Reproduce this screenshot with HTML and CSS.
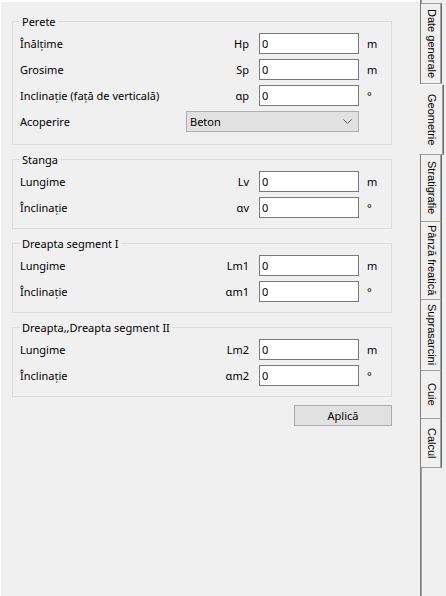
FILE: index.html
```html
<!DOCTYPE html>
<html lang="ro">
<head>
<meta charset="utf-8">
<title>Geometrie</title>
<link rel="stylesheet" href="styles.css">
</head>
<body>
<div class="window">
  <main class="page">
    <fieldset class="group group-wall">
      <legend>Perete</legend>
      <div class="row">
        <span class="label">Înălțime</span>
        <span class="sym">Hp</span>
        <input class="field" type="text" value="0">
        <span class="unit">m</span>
      </div>
      <div class="row">
        <span class="label">Grosime</span>
        <span class="sym">Sp</span>
        <input class="field" type="text" value="0">
        <span class="unit">m</span>
      </div>
      <div class="row">
        <span class="label">Inclinație (față de verticală)</span>
        <span class="sym">αp</span>
        <input class="field" type="text" value="0">
        <span class="unit">°</span>
      </div>
      <div class="row row-combo">
        <span class="label">Acoperire</span>
        <div class="combo">
          <span>Beton</span>
          <svg class="chev" width="9" height="5" viewBox="0 0 9 5"><path d="M0.5 0.5 L4.5 4.5 L8.5 0.5" fill="none" stroke="#5a5a5a" stroke-width="1"/></svg>
        </div>
      </div>
    </fieldset>

    <fieldset class="group">
      <legend>Stanga</legend>
      <div class="row">
        <span class="label">Lungime</span>
        <span class="sym">Lv</span>
        <input class="field" type="text" value="0">
        <span class="unit">m</span>
      </div>
      <div class="row">
        <span class="label">Înclinație</span>
        <span class="sym">αv</span>
        <input class="field" type="text" value="0">
        <span class="unit">°</span>
      </div>
    </fieldset>

    <fieldset class="group">
      <legend>Dreapta segment I</legend>
      <div class="row">
        <span class="label">Lungime</span>
        <span class="sym">Lm1</span>
        <input class="field" type="text" value="0">
        <span class="unit">m</span>
      </div>
      <div class="row">
        <span class="label">Înclinație</span>
        <span class="sym">αm1</span>
        <input class="field" type="text" value="0">
        <span class="unit">°</span>
      </div>
    </fieldset>

    <fieldset class="group">
      <legend>Dreapta,,Dreapta segment II</legend>
      <div class="row">
        <span class="label">Lungime</span>
        <span class="sym">Lm2</span>
        <input class="field" type="text" value="0">
        <span class="unit">m</span>
      </div>
      <div class="row">
        <span class="label">Înclinație</span>
        <span class="sym">αm2</span>
        <input class="field" type="text" value="0">
        <span class="unit">°</span>
      </div>
    </fieldset>

    <div class="actions">
      <button class="btn" type="button">Aplică</button>
    </div>
  </main>

  <nav class="tabs">
    <div class="tab t-general">Date generale</div>
    <div class="tab t-geom active">Geometrie</div>
    <div class="tab t-strat">Stratigrafie</div>
    <div class="tab t-water">Pânză freatică</div>
    <div class="tab t-load">Suprasarcini</div>
    <div class="tab t-nails">Cuie</div>
    <div class="tab t-calc">Calcul</div>
  </nav>
</div>
</body>
</html>
```

FILE: styles.css
```css
html, body {
  margin: 0;
  padding: 0;
  background: #f0f0f0;
}

body {
  font-family: "Noto Sans", "Open Sans", sans-serif;
  font-size: 11px;
  color: #000;
}

.window {
  display: flex;
  width: 446px;
  height: 596px;
  overflow: hidden;
}

/* tab page */
.page {
  width: 408px;
  border-top: 2px solid #fff;
  border-left: 1px solid #fff;
  padding: 12px 0 0 11px;
  box-sizing: content-box;
}

.group {
  width: 380px;
  box-sizing: border-box;
  margin: 0 0 7px 0;
  padding: 4px 0 10px 7px;
  border: 1px solid #dcdcdc;
  min-inline-size: 0;
}

.group-wall {
  padding-bottom: 12px;
}

.group legend {
  padding: 0 2px;
  margin: 0;
  line-height: 15px;
  height: 15px;
}

.row {
  display: grid;
  grid-template-columns: 1fr auto 100px 32px;
  align-items: center;
  height: 21px;
  margin-bottom: 5px;
}

.row:last-child {
  margin-bottom: 0;
}

.row-combo {
  grid-template-columns: 1fr 173px 32px;
}

.sym {
  text-align: right;
  margin-right: 10px;
}

.unit {
  padding-left: 8px;
}

.field {
  box-sizing: border-box;
  width: 100px;
  height: 21px;
  margin: 0;
  padding: 0 0 0 2px;
  border: 1px solid #7a7a7a;
  background: #fff;
  font: inherit;
  color: #000;
  outline: none;
}

.combo {
  box-sizing: border-box;
  height: 21px;
  display: flex;
  align-items: center;
  justify-content: space-between;
  padding: 0 6px 0 3px;
  background: #e1e1e1;
  border: 1px solid #adadad;
}

.chev {
  display: block;
}

.actions {
  width: 380px;
  display: flex;
  justify-content: flex-end;
  padding-top: 1px;
}

.btn {
  box-sizing: border-box;
  width: 98px;
  height: 21px;
  margin: 0;
  padding: 0;
  background: #e1e1e1;
  border: 1px solid #adadad;
  font: inherit;
  color: #000;
}

/* vertical tab strip */
.tabs {
  width: 25px;
  border-left: 1px solid #7f7f7f;
  box-shadow: inset 1px 0 0 #a0a0a0;
  display: flex;
  flex-direction: column;
  padding-top: 3px;
  font-family: "Liberation Sans", Arial, sans-serif;
  font-size: 11px;
}

.tab {
  box-sizing: border-box;
  width: 21px;
  writing-mode: vertical-rl;
  display: flex;
  align-items: center;
  justify-content: center;
  border-top: 1px solid #a0a0a0;
  border-bottom: 1px solid #a0a0a0;
  border-right: 1px solid #696969;
  box-shadow: inset -1px 0 0 #a0a0a0;
  background: #f0f0f0;
  white-space: nowrap;
  line-height: 19px;
}

.tab + .tab {
  border-top: none;
}

.t-general { height: 81px; }
.t-geom { height: 71px; }
.t-strat { height: 67px; }
.t-water { height: 78px; }
.t-load { height: 71px; }
.t-nails { height: 48px; }
.t-calc { height: 49px; }

.tab.active {
  width: 25px;
  margin-left: -2px;
  border-top: 1px solid #fff;
  border-bottom: 1px solid #a0a0a0;
  position: relative;
}
```
